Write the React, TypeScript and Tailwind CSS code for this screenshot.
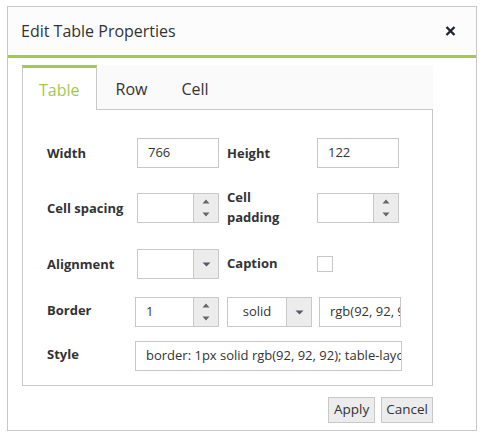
import React from 'react';

const font = { fontFamily: '"Open Sans", "Noto Sans", sans-serif' };

function Spinner() {
  return (
    <div className="w-[25px] h-full flex flex-col items-center justify-center gap-[8px] bg-[#ececec] border-l border-[#c8c8c8]">
      <svg width="8" height="5" viewBox="0 0 8 5">
        <path d="M4 0.5L7.5 4.5H0.5Z" fill="#666" />
      </svg>
      <svg width="8" height="5" viewBox="0 0 8 5">
        <path d="M0.5 0.5H7.5L4 4.5Z" fill="#666" />
      </svg>
    </div>
  );
}

function Arrow() {
  return (
    <div className="w-[25px] h-full flex items-center justify-center bg-[#ececec] border-l border-[#c8c8c8]">
      <svg width="9" height="5" viewBox="0 0 9 5">
        <path d="M0.5 0.5H8.5L4.5 4.5Z" fill="#555b66" />
      </svg>
    </div>
  );
}

function TextBox({ value, className = '' }: { value?: string; className?: string }) {
  return (
    <div className={`h-[30px] border border-[#c8c8c8] bg-white flex items-center pl-[10px] overflow-hidden whitespace-nowrap text-[13px] text-[#333] ${className}`}>
      {value}
    </div>
  );
}

function NumberBox({ value, className = 'w-[82px]' }: { value?: string; className?: string }) {
  return (
    <div className={`h-[30px] border border-[#c8c8c8] bg-white flex ${className}`}>
      <div className="flex-1 flex items-center pl-[10px] text-[13px] text-[#333]">{value}</div>
      <Spinner />
    </div>
  );
}

function DropBox({ value, className = 'w-[82px]' }: { value?: string; className?: string }) {
  return (
    <div className={`h-[30px] border border-[#c8c8c8] bg-white flex ${className}`}>
      <div className="flex-1 flex items-center justify-center text-[13px] text-[#333]">{value}</div>
      <Arrow />
    </div>
  );
}

function Label({ children, className = 'w-[90px]' }: { children: React.ReactNode; className?: string }) {
  return (
    <div className={`shrink-0 text-[13px] font-bold leading-[20px] text-[#333] ${className}`}>{children}</div>
  );
}

export default function App() {
  return (
    <div className="w-[483px] h-[438px] bg-white pt-[6px] pl-[7px]" style={font}>
      <div className="w-[470px] h-[425px] border border-[#c8c8c8] flex flex-col">
        {/* Header */}
        <div className="h-[51px] bg-[#fcfcfc] border-b-[3px] border-[#a6ca48] flex items-center justify-between pl-[13px] pr-[20px]">
          <span className="text-[16px] text-[#333]">Edit Table Properties</span>
          <svg width="11" height="10" viewBox="0 0 11 10">
            <path d="M1.5 1L9.5 9M9.5 1L1.5 9" stroke="#1f2430" strokeWidth="2.4" />
          </svg>
        </div>

        {/* Body */}
        <div className="pl-[14px] pt-[7px]">
          <div className="w-[411px] h-[45px] flex bg-[#fafafa]">
            <div className="h-[45px] px-[16px] pt-[2px] flex items-center bg-white border-t-[3px] border-l border-r border-[#c8c8c8] border-t-[#a6ca48] text-[16px] text-[#a2c84e]">
              Table
            </div>
            <div className="flex-1 flex items-center pt-[4px] border-b border-[#c8c8c8] text-[16px] text-[#333]">
              <span className="pl-[19px]">Row</span>
              <span className="pl-[34px]">Cell</span>
            </div>
          </div>

          <div className="w-[411px] h-[276px] border-l border-r border-b border-[#c8c8c8] pt-[28px] pl-[24px]">
            <div className="h-[30px] flex items-center">
              <Label>Width</Label>
              <TextBox value="766" className="w-[82px]" />
              <Label className="w-[90px] ml-[8px]">Height</Label>
              <TextBox value="122" className="w-[82px]" />
            </div>

            <div className="h-[30px] flex items-center mt-[25px]">
              <Label>Cell spacing</Label>
              <NumberBox />
              <Label className="w-[90px] ml-[8px] -mt-[3px]">
                Cell
                <br />
                padding
              </Label>
              <NumberBox />
            </div>

            <div className="h-[30px] flex items-center mt-[26px]">
              <Label>Alignment</Label>
              <DropBox />
              <Label className="w-[90px] ml-[8px] -mt-[2px]">Caption</Label>
              <div className="w-[16px] h-[16px] border border-[#c8c8c8] bg-white" />
            </div>

            <div className="h-[30px] flex items-start mt-[18px]">
              <Label className="w-[88px] pt-[3px]">Border</Label>
              <NumberBox value="1" className="w-[84px]" />
              <DropBox value="solid" className="w-[85px] ml-[8px]" />
              <TextBox value="rgb(92, 92, 92)" className="w-[82px] ml-[7px]" />
            </div>

            <div className="h-[30px] flex items-start mt-[14px]">
              <Label className="w-[88px] pt-[3px]">Style</Label>
              <TextBox
                value="border: 1px solid rgb(92, 92, 92); table-layout: auto;"
                className="w-[267px]"
              />
            </div>
          </div>

          <div className="w-[411px] flex justify-end gap-[6px] mt-[11px]">
            <button className="h-[26px] px-[5px] bg-[#ececec] border border-[#c8c8c8] text-[13.5px] text-[#333] leading-none">
              Apply
            </button>
            <button className="h-[26px] px-[4px] bg-[#ececec] border border-[#c8c8c8] text-[13.5px] text-[#333] leading-none">
              Cancel
            </button>
          </div>
        </div>
      </div>
    </div>
  );
}
